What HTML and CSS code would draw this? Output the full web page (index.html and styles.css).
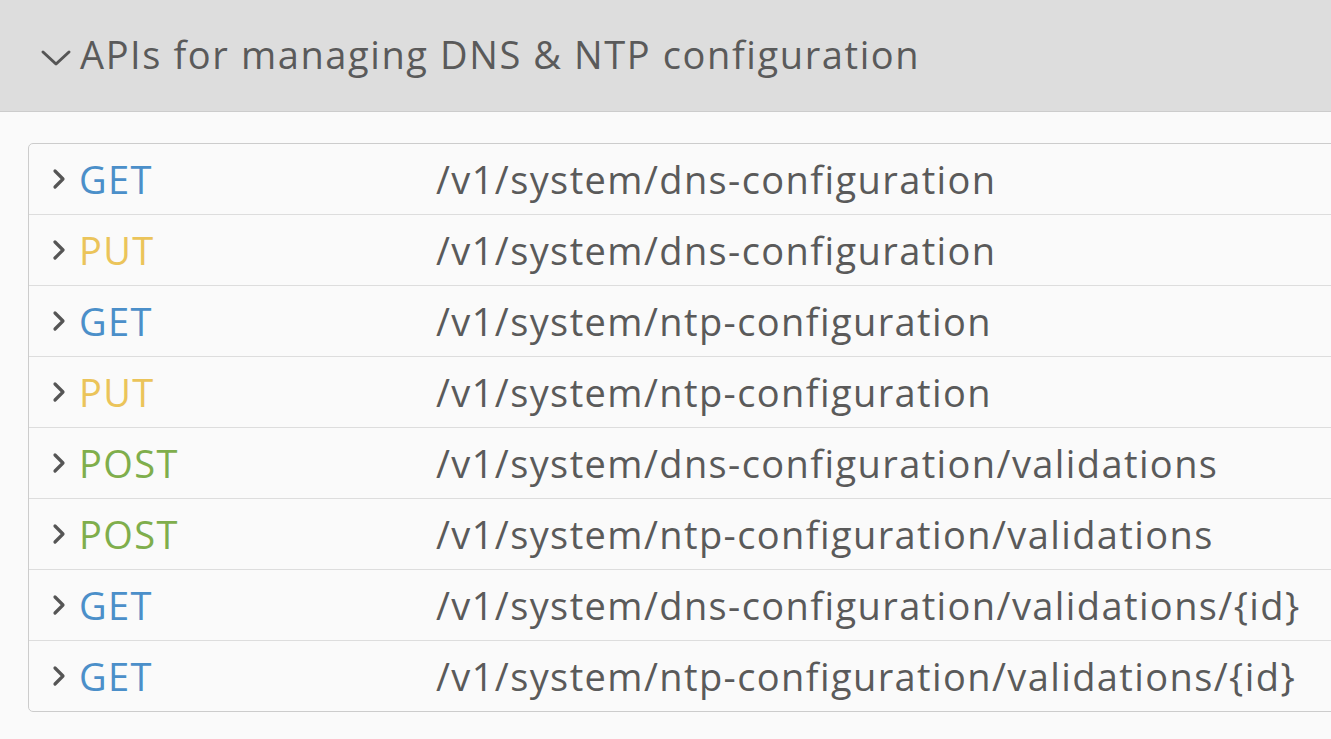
FILE: index.html
```html
<!DOCTYPE html>
<html lang="en">
<head>
<meta charset="utf-8">
<title>APIs for managing DNS &amp; NTP configuration</title>
<link rel="stylesheet" href="styles.css">
</head>
<body>
<div class="group">
  <div class="group-header">
    <svg class="chev-down" viewBox="0 0 32 20" width="32" height="20"><path d="M3 4 L16 16 L29 4" fill="none" stroke="#555" stroke-width="3" stroke-linecap="round" stroke-linejoin="round"/></svg>
    <span class="group-title">APIs for managing DNS &amp; NTP configuration</span>
  </div>
  <div class="group-body">
    <div class="api-table">
      <div class="api-row"><svg class="chev-right" viewBox="0 0 14 22" width="14" height="22"><path d="M3 3 L11 11 L3 19" fill="none" stroke="#555" stroke-width="3.2" stroke-linecap="round" stroke-linejoin="round"/></svg><span class="method get">GET</span><span class="path">/v1/system/dns-configuration</span></div>
      <div class="api-row"><svg class="chev-right" viewBox="0 0 14 22" width="14" height="22"><path d="M3 3 L11 11 L3 19" fill="none" stroke="#555" stroke-width="3.2" stroke-linecap="round" stroke-linejoin="round"/></svg><span class="method put">PUT</span><span class="path">/v1/system/dns-configuration</span></div>
      <div class="api-row"><svg class="chev-right" viewBox="0 0 14 22" width="14" height="22"><path d="M3 3 L11 11 L3 19" fill="none" stroke="#555" stroke-width="3.2" stroke-linecap="round" stroke-linejoin="round"/></svg><span class="method get">GET</span><span class="path">/v1/system/ntp-configuration</span></div>
      <div class="api-row"><svg class="chev-right" viewBox="0 0 14 22" width="14" height="22"><path d="M3 3 L11 11 L3 19" fill="none" stroke="#555" stroke-width="3.2" stroke-linecap="round" stroke-linejoin="round"/></svg><span class="method put">PUT</span><span class="path">/v1/system/ntp-configuration</span></div>
      <div class="api-row"><svg class="chev-right" viewBox="0 0 14 22" width="14" height="22"><path d="M3 3 L11 11 L3 19" fill="none" stroke="#555" stroke-width="3.2" stroke-linecap="round" stroke-linejoin="round"/></svg><span class="method post">POST</span><span class="path">/v1/system/dns-configuration/validations</span></div>
      <div class="api-row"><svg class="chev-right" viewBox="0 0 14 22" width="14" height="22"><path d="M3 3 L11 11 L3 19" fill="none" stroke="#555" stroke-width="3.2" stroke-linecap="round" stroke-linejoin="round"/></svg><span class="method post">POST</span><span class="path">/v1/system/ntp-configuration/validations</span></div>
      <div class="api-row"><svg class="chev-right" viewBox="0 0 14 22" width="14" height="22"><path d="M3 3 L11 11 L3 19" fill="none" stroke="#555" stroke-width="3.2" stroke-linecap="round" stroke-linejoin="round"/></svg><span class="method get">GET</span><span class="path">/v1/system/dns-configuration/validations/{id}</span></div>
      <div class="api-row"><svg class="chev-right" viewBox="0 0 14 22" width="14" height="22"><path d="M3 3 L11 11 L3 19" fill="none" stroke="#555" stroke-width="3.2" stroke-linecap="round" stroke-linejoin="round"/></svg><span class="method get">GET</span><span class="path">/v1/system/ntp-configuration/validations/{id}</span></div>
    </div>
  </div>
</div>
</body>
</html>
```

FILE: styles.css
```css
html, body {
  margin: 0;
  padding: 0;
  background: #fafafa;
  overflow: hidden;
}
body {
  font-family: "Open Sans", "Noto Sans", sans-serif;
  color: #565656;
}
.group-header {
  height: 111px;
  background: #dddddd;
  border-bottom: 1px solid #cccccc;
  display: flex;
  align-items: center;
  padding-left: 40px;
}
.chev-down {
  display: block;
  margin-right: 8px;
  margin-top: 4px;
}
.group-title {
  font-size: 38px;
  letter-spacing: 1.6px;
  color: #5a5a5a;
  line-height: 1;
  margin-top: -4px;
}
.group-body {
  padding: 31px 0 0 28px;
}
.api-table {
  width: 1340px;
  border: 1px solid #cccccc;
  border-radius: 5px;
  background: #fafafa;
}
.api-row {
  height: 70px;
  display: flex;
  align-items: center;
  border-top: 1px solid #dddddd;
  padding-left: 23px;
}
.api-row:first-child {
  border-top: none;
}
.chev-right {
  display: block;
  margin-right: 13px;
}
.method {
  width: 357px;
  font-size: 38px;
  letter-spacing: 1.4px;
  line-height: 1;
}
.path {
  font-size: 38px;
  letter-spacing: 1.4px;
  line-height: 1;
  color: #5a5a5a;
}
.get { color: #4b8fc9; }
.put { color: #ebc45a; }
.post { color: #7fae4c; }
```
